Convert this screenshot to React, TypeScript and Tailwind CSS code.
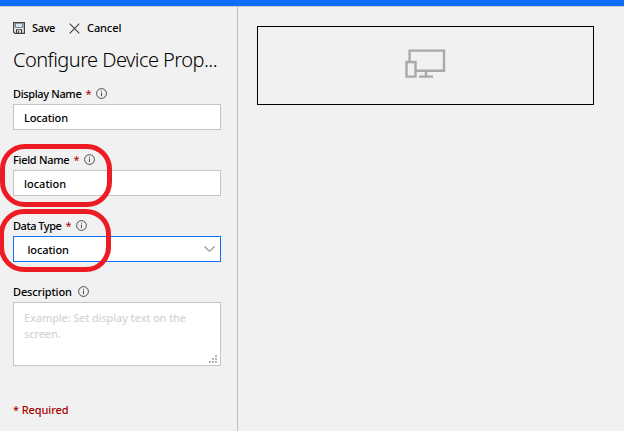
import type { ReactNode } from "react";

function InfoIcon() {
  return (
    <svg className="h-[11px] w-[11px] shrink-0" viewBox="0 0 11 11" fill="none" stroke="#3b3b3b">
      <circle cx="5.5" cy="5.5" r="4.9" strokeWidth="0.9" />
      <path d="M5.5 4.6V8.2M5.5 2.7V3.7" strokeWidth="0.9" />
    </svg>
  );
}

function SaveIcon() {
  return (
    <svg className="h-3 w-3 shrink-0" viewBox="0 0 12 12" fill="none">
      <path d="M2.5 1H9.5V5.5H2.5Z" fill="#d9e6f2" stroke="#6384a5" />
      <path d="M0.6 0.6H11.4V11.4H2L0.6 10Z" stroke="#4b4044" strokeWidth="1.2" />
      <path d="M1.5 6V2M10.5 6V2" stroke="#c79b7a" strokeWidth="0.7" />
      <path d="M3.5 11.2V7.8H8.6V11.2M5.5 9V11" stroke="#38343b" strokeWidth="1.1" />
    </svg>
  );
}

interface FieldProps {
  label: string;
  labelClass: string;
  required?: boolean;
  children: ReactNode;
}

function Field({ label, labelClass, required, children }: FieldProps) {
  return (
    <div>
      <div className="flex h-5 items-center">
        <span className={labelClass}>{label}</span>
        {required && <span className="ml-[2.5px] w-[5.5px] font-normal text-[#a80000]">*</span>}
        <span className="ml-[5px] -mt-px">
          <InfoIcon />
        </span>
      </div>
      {children}
    </div>
  );
}

export default function App() {
  return (
    <div className="relative flex h-[431px] w-[624px] flex-col overflow-hidden bg-[#f1f1f1] font-['Noto_Sans','Open_Sans',sans-serif] text-[11px] leading-4 font-medium whitespace-nowrap text-black">
      <header className="h-[7px] shrink-0 border-b border-[#c8c8c8] bg-[#106efd]" />
      <div className="flex flex-1">
        <aside className="w-[238px] shrink-0 border-r border-[#c0c0c0] pl-[13px]">
          <div className="mt-[13px] flex h-4 items-center">
            <SaveIcon />
            <span className="ml-[7px] w-[37px] tracking-[-0.35px]">Save</span>
            <svg className="h-[11px] w-[11px]" viewBox="0 0 11 11" stroke="#403d45" strokeWidth="1.1">
              <path d="M0.7 0.7L10.3 10.3M10.3 0.7L0.7 10.3" />
            </svg>
            <span className="ml-[7px] tracking-[-0.1px]">Cancel</span>
          </div>
          <h1 className="mt-[10px] h-7 text-[20px] leading-7 font-light tracking-[-0.54px]">Configure Device Prop...</h1>
          <div className="mt-[10px] flex w-[208px] flex-col gap-5">
            <Field label="Display Name" labelClass="w-[70px] tracking-[-0.36px]" required>
              <div className="flex h-[26px] items-center border border-[#c4c4c4] bg-white px-[10px] pt-px tracking-[-0.15px]">Location</div>
            </Field>
            <Field label="Field Name" labelClass="w-[58px] tracking-[-0.3px]" required>
              <div className="flex h-[26px] items-center border border-[#c4c4c4] bg-white px-[10px] pt-px">location</div>
            </Field>
            <Field label="Data Type" labelClass="w-[50px] tracking-[-0.47px]" required>
              <div className="flex h-[26px] items-center justify-between border border-[#106efd] bg-white pr-[5px] pl-[13.5px]">
                <span className="pt-px tracking-[-0.1px]">location</span>
                <svg className="h-[6px] w-[11px]" viewBox="0 0 11 6" fill="none" stroke="#8c8c8c" strokeWidth="1.1">
                  <path d="M0.5 0.5L5.5 5.3L10.5 0.5" />
                </svg>
              </div>
            </Field>
            <Field label="Description" labelClass="w-[60px] tracking-[-0.15px]">
              <div className="relative h-16 border border-[#c4c4c4] bg-white px-[10px] pt-[7px] tracking-[-0.17px] text-[#d5d5d5]">
                Example: Set display text on the
                <br />
                screen.
                <svg className="absolute right-[3px] bottom-[2px] h-2 w-2" viewBox="0 0 8 8" fill="#b5b5b5" shapeRendering="crispEdges">
                  <path d="M6 0h2v2H6zM3 3h2v2H3zM6 3h2v2H6zM0 6h2v2H0zM3 6h2v2H3zM6 6h2v2H6z" />
                </svg>
              </div>
            </Field>
          </div>
          <p className="mt-9 tracking-[-0.1px] text-[#a80000]">* Required</p>
        </aside>
        <main className="flex-1 pt-[19px] pl-[19px]">
          <div className="flex h-[79px] w-[337px] items-center justify-center border border-black">
            <svg className="-mt-[4px] h-[29px] w-[41px]" viewBox="0 0 41 29" fill="none" stroke="#a9a9a9" strokeWidth="2.4">
              <path d="M4.6 12V1.6H39V21.8H11M21 22V27M14 27.6H28" />
              <path d="M1.5 13H10.5V27.6H1.5Z" />
            </svg>
          </div>
        </main>
      </div>
      <div className="absolute top-[144px] left-0 h-[63px] w-28 rounded-[25px] border-5 border-[#ed1c24]" />
      <div className="absolute top-[209px] -left-px h-[63px] w-28 rounded-[25px] border-5 border-[#ed1c24]" />
    </div>
  );
}
